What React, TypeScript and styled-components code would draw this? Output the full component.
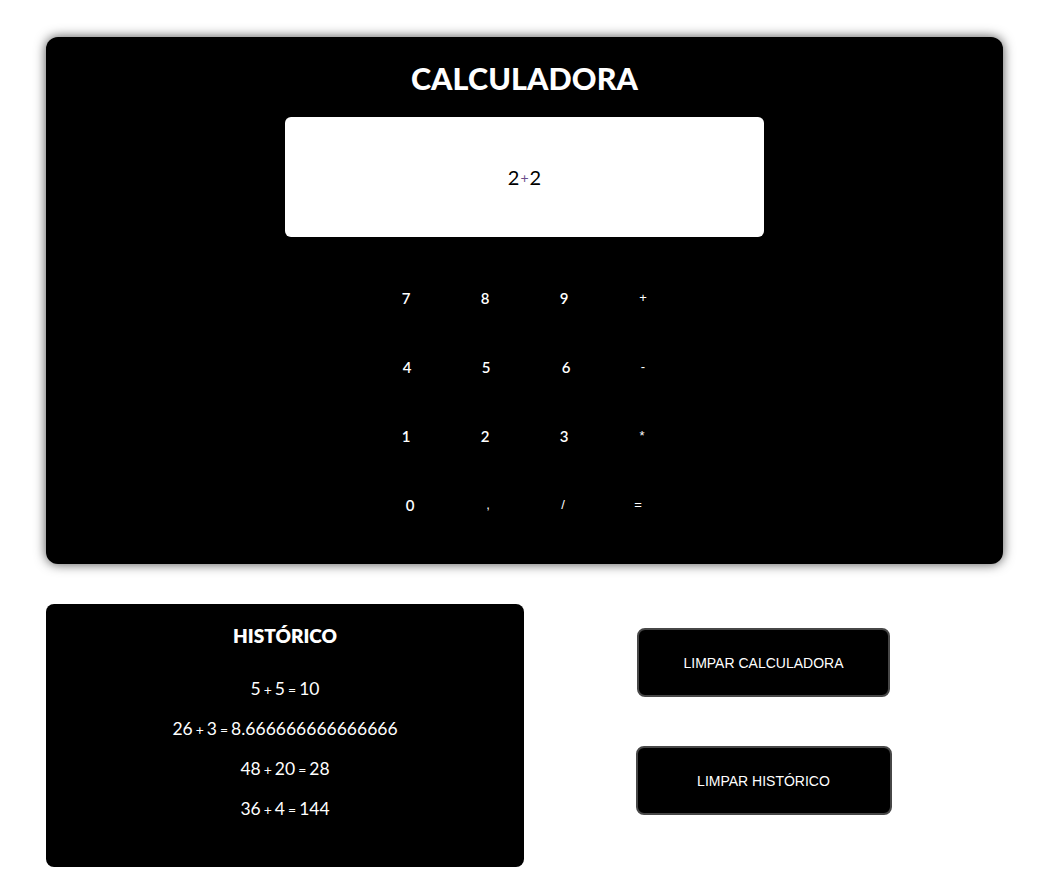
import React from "react";
import styled, { createGlobalStyle } from "styled-components";

const Global = createGlobalStyle`
  html, body { margin: 0; padding: 0; background: #fff; }
  body { font-family: Lato, "Open Sans", sans-serif; }
`;

const Page = styled.div`
  width: 957px;
  padding: 37px 0 23px 46px;
  display: flex;
  flex-direction: column;
  gap: 40px;
`;

const Calculator = styled.section`
  background: #000;
  border-radius: 12px;
  box-shadow: 0 0 12px rgba(0, 0, 0, 0.7);
  height: 527px;
  box-sizing: border-box;
  padding-top: 21px;
  display: flex;
  flex-direction: column;
  align-items: center;
`;

const Title = styled.h1`
  margin: 0;
  color: #fff;
  font-family: Lato, sans-serif;
  font-weight: 900;
  font-size: 30.5px;
  line-height: 40px;
  letter-spacing: 0.1px;
`;

const Display = styled.div`
  margin-top: 19px;
  width: 479px;
  height: 120px;
  background: #fff;
  border-radius: 6px;
  display: flex;
  align-items: center;
  justify-content: center;
  font-family: Lato, sans-serif;
  font-size: 20px;
  color: #000;
`;

const DisplayOp = styled.span`
  font-size: 14px;
  color: #6a4c8c;
  margin: 0 1px;
`;

const Keypad = styled.div`
  margin-top: 26px;
  display: grid;
  grid-template-columns: repeat(4, 79px);
  grid-auto-rows: 69px;
`;

const Key = styled.button<{ $op?: boolean; $dx?: number }>`
  background: transparent;
  border: none;
  color: #fff;
  padding: 0;
  cursor: pointer;
  display: flex;
  align-items: center;
  justify-content: center;
  font-family: ${(p) => (p.$op ? '"Liberation Sans", Arial, sans-serif' : "Lato, sans-serif")};
  font-size: ${(p) => (p.$op ? "13px" : "15px")};
  font-weight: ${(p) => (p.$op ? 400 : 600)};
  transform: translateX(${(p) => p.$dx ?? 0}px);
`;

const Bottom = styled.div`
  display: grid;
  grid-template-columns: 478px 479px;
`;

const History = styled.section`
  background: #000;
  border-radius: 8px;
  height: 263px;
  box-sizing: border-box;
  padding-top: 20px;
  display: flex;
  flex-direction: column;
  align-items: center;
  color: #fff;
`;

const HistoryTitle = styled.h2`
  margin: 0;
  font-family: Lato, sans-serif;
  font-weight: 800;
  font-size: 19px;
  line-height: 24px;
`;

const Entries = styled.ul`
  list-style: none;
  margin: 30px 0 0;
  padding: 0;
  display: flex;
  flex-direction: column;
  align-items: center;
  gap: 18px;
`;

const Entry = styled.li`
  font-family: Lato, sans-serif;
  font-size: 17.5px;
  line-height: 22px;
  height: 22px;
`;

const Sym = styled.span`
  font-size: 14px;
  line-height: 1;
  margin: 0 3px;
`;

const Actions = styled.div`
  display: flex;
  flex-direction: column;
  align-items: center;
  padding-top: 24px;
  gap: 49px;
`;

const ActionButton = styled.button<{ $w: number }>`
  width: ${(p) => p.$w}px;
  height: 69px;
  background: #000;
  color: #fff;
  border: 2px solid #474747;
  border-radius: 8px;
  font-family: "Liberation Sans", Arial, sans-serif;
  font-size: 14px;
  cursor: pointer;
`;

const keys: { label: string; op?: boolean; dx?: number }[] = [
  { label: "7" }, { label: "8" }, { label: "9" }, { label: "+", op: true },
  { label: "4", dx: 1 }, { label: "5", dx: 1 }, { label: "6", dx: 2 }, { label: "-", op: true },
  { label: "1" }, { label: "2" }, { label: "3" }, { label: "*", op: true, dx: -1 },
  { label: "0", dx: 4 }, { label: ",", op: true, dx: 3 }, { label: "/", op: true, dx: -1 }, { label: "=", op: true, dx: -5 },
];

const history: [string, string, string, string][] = [
  ["5", "+", "5", "10"],
  ["26", "+", "3", "8.666666666666666"],
  ["48", "+", "20", "28"],
  ["36", "+", "4", "144"],
];

export default function App() {
  return (
    <>
      <Global />
      <Page>
        <Calculator>
          <Title>CALCULADORA</Title>
          <Display>
            2<DisplayOp>+</DisplayOp>2
          </Display>
          <Keypad>
            {keys.map((k, i) => (
              <Key key={i} $op={k.op} $dx={k.dx}>
                {k.label}
              </Key>
            ))}
          </Keypad>
        </Calculator>
        <Bottom>
          <History>
            <HistoryTitle>HISTÓRICO</HistoryTitle>
            <Entries>
              {history.map(([a, op, b, r], i) => (
                <Entry key={i}>
                  {a}
                  <Sym>{op}</Sym>
                  {b}
                  <Sym>=</Sym>
                  {r}
                </Entry>
              ))}
            </Entries>
          </History>
          <Actions>
            <ActionButton $w={253}>LIMPAR CALCULADORA</ActionButton>
            <ActionButton $w={256}>LIMPAR HISTÓRICO</ActionButton>
          </Actions>
        </Bottom>
      </Page>
    </>
  );
}
